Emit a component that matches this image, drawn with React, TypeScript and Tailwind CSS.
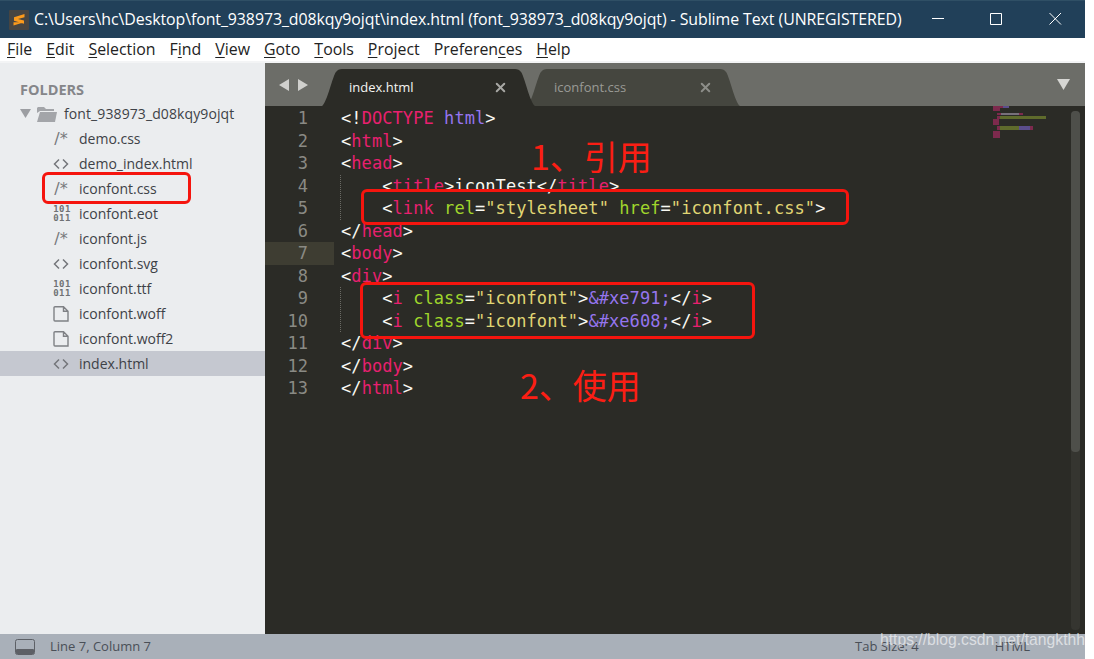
import { Fragment } from "react";
import { X } from "lucide-react";

type Tok = [string, string];

const P = "text-[#f8f8f2]";
const T = "text-[#e8206f]";
const A = "text-[#a0d62c]";
const S = "text-[#e0d674]";
const V = "text-[#9575ee]";

const code: Tok[][] = [
  [["<!", P], ["DOCTYPE", T], [" ", P], ["html", V], [">", P]],
  [["<", P], ["html", T], [">", P]],
  [["<", P], ["head", T], [">", P]],
  [["    <", P], ["title", T], [">iconTest</", P], ["title", T], [">", P]],
  [["    <", P], ["link", T], [" ", P], ["rel", A], ["=", P], ['"stylesheet"', S], [" ", P], ["href", A], ["=", P], ['"iconfont.css"', S], [">", P]],
  [["</", P], ["head", T], [">", P]],
  [["<", P], ["body", T], [">", P]],
  [["<", P], ["div", T], [">", P]],
  [["    <", P], ["i", T], [" ", P], ["class", A], ["=", P], ['"iconfont"', S], [">", P], ["&#xe791;", V], ["</", P], ["i", T], [">", P]],
  [["    <", P], ["i", T], [" ", P], ["class", A], ["=", P], ['"iconfont"', S], [">", P], ["&#xe608;", V], ["</", P], ["i", T], [">", P]],
  [["</", P], ["div", T], [">", P]],
  [["</", P], ["body", T], [">", P]],
  [["</", P], ["html", T], [">", P]],
];

const files = [
  { name: "demo.css", icon: "css" },
  { name: "demo_index.html", icon: "html" },
  { name: "iconfont.css", icon: "css" },
  { name: "iconfont.eot", icon: "bin" },
  { name: "iconfont.js", icon: "css" },
  { name: "iconfont.svg", icon: "html" },
  { name: "iconfont.ttf", icon: "bin" },
  { name: "iconfont.woff", icon: "file" },
  { name: "iconfont.woff2", icon: "file" },
  { name: "index.html", icon: "html" },
];

const menu = ["File", "Edit", "Selection", "Find", "View", "Goto", "Tools", "Project", "Preferences", "Help"];
const underlineAt: Record<string, number> = { Find: 1, Preferences: 8 };

function FileIcon({ icon }: { icon: string }) {
  if (icon === "css") {
    return <span className="w-4 text-center text-[16px] leading-none text-[#77797c] font-['DejaVu_Sans',sans-serif]">/*</span>;
  }
  if (icon === "bin") {
    return (
      <span className="w-[18px] text-center text-[9px] leading-[9px] font-semibold tracking-[0.4px] text-[#6f7174] font-['DejaVu_Sans_Mono',monospace]">
        101<br />011
      </span>
    );
  }
  if (icon === "html") {
    return (
      <svg width="16" height="12" viewBox="0 0 16 12" fill="none" stroke="#74767a" strokeWidth="1.5">
        <path d="M6 1.5 1.5 6 6 10.5M10 1.5 14.5 6 10 10.5" />
      </svg>
    );
  }
  return (
    <svg width="16" height="16" viewBox="0 0 16 16" fill="none" stroke="#7f8185" strokeWidth="1.4">
      <path d="M2 .8h8.5L15 5.3V15H2a1 1 0 0 1-1-1V1.8a1 1 0 0 1 1-1ZM10.5.8v4.5H15" />
    </svg>
  );
}

function Tab({ label, active }: { label: string; active?: boolean }) {
  return (
    <div className={`relative flex h-[37px] w-[213px] items-center text-[13px] ${active ? "z-10 text-[#f4f4f2]" : "-ml-[8px] text-[#9a9b96]"}`}>
      <svg className="absolute inset-0" width="213" height="37" viewBox="0 0 213 37">
        <path
          d="M0 37 C5 34 11 6 14 3 Q16 0 20 0 H193 Q197 0 199 3 C202 6 208 34 213 37 Z"
          fill={active ? "#2b2b26" : "#45463f"}
        />
      </svg>
      <span className="relative ml-[27px] flex-1">{label}</span>
      <X className={`relative mr-[27px] ${active ? "text-[#a8a8a4]" : "text-[#8d8e89]"}`} size={15} strokeWidth={3.2} />
    </div>
  );
}

function Minimap() {
  return (
    <svg className="absolute left-[728px] top-0" width="54" height="34" viewBox="0 0 54 34">
      <rect x="0" y="0" width="10" height="2" fill="#7d2a4d" />
      <rect x="10" y="0" width="6" height="2" fill="#5b4e8c" />
      <rect x="0" y="2" width="7" height="3" fill="#7d2a4d" />
      <rect x="4" y="7" width="4" height="2" fill="#7d2a4d" />
      <rect x="8" y="7" width="18" height="2" fill="#77707a" />
      <rect x="26" y="7" width="4" height="2" fill="#7d2a4d" />
      <rect x="4" y="10" width="3" height="3" fill="#7d2a4d" />
      <rect x="7" y="10" width="46" height="3" fill="#5f6b2c" />
      <rect x="0" y="13" width="6" height="6" fill="#7d2a4d" />
      <rect x="4" y="20" width="3" height="4" fill="#7d2a4d" />
      <rect x="7" y="20" width="19" height="4" fill="#5f6b2c" />
      <rect x="26" y="20" width="11" height="4" fill="#5b4e8c" />
      <rect x="37" y="20" width="3" height="4" fill="#7d2a4d" />
      <rect x="0" y="25" width="7" height="7" fill="#7d2a4d" />
    </svg>
  );
}

export default function App() {
  return (
    <div className="relative flex h-[659px] w-[1094px] overflow-hidden bg-white font-['Open_Sans',sans-serif]">
      <div className="flex w-[1085px] flex-col">
        {/* title bar */}
        <div className="flex h-[38px] shrink-0 items-center border-t border-t-[#2f4f65] bg-[#214059] pl-[9px] text-white">
          <svg width="20" height="20" viewBox="0 0 20 20">
            <rect width="20" height="20" rx="1" fill="#474542" />
            <path d="M15.5 4 5 7.2v3.6l10 3v-3.2L9 9l6.5-1.8ZM4.5 12.2v3.3l10.5-3.2Z" fill="#fb9a1c" />
          </svg>
          <span className="ml-[5px] text-[15.9px] tracking-[-0.07px]">
            C:\Users\hc\Desktop\font_938973_d08kqy9ojqt\index.html (font_938973_d08kqy9ojqt) - Sublime Text (UNREGISTERED)
          </span>
          <svg className="absolute left-[932px] top-[12px]" width="130" height="14" viewBox="0 0 130 14" fill="none" stroke="#fff">
            <path d="M0 6.5h12M58.5 1.5h11v11h-11ZM117.5 1 129 12.5M129 1 117.5 12.5" />
          </svg>
        </div>

        {/* menu */}
        <div className="flex h-[23px] shrink-0 items-center gap-[14px] bg-white pl-[7px] text-[15.9px] text-[#222]">
          {menu.map((m) => {
            const i = underlineAt[m] ?? 0;
            return (
              <span key={m}>
                {m.slice(0, i)}
                <span className="underline underline-offset-2">{m[i]}</span>
                {m.slice(i + 1)}
              </span>
            );
          })}
        </div>
        <div className="h-[2px] shrink-0 bg-[#f3f4f5]" />

        <div className="flex min-h-0 flex-1">
          {/* sidebar */}
          <div className="w-[265px] shrink-0 bg-[#ebedef] pt-[16px]">
            <div className="pl-[20px] text-[14.5px] font-bold leading-[22px] text-[#85868a]">FOLDERS</div>
            <div className="flex h-[25px] items-center pl-[20px] text-[14px] text-[#3e4247]">
              <svg width="11" height="9" viewBox="0 0 11 9">
                <path d="M0 0h11L5.5 9Z" fill="#9c9ea2" />
              </svg>
              <svg className="ml-[5px]" width="21" height="16" viewBox="0 0 21 16">
                <path d="M2 1h6l2 2h8v2H4L1 7V2Z" fill="#a3a5a9" />
                <path d="M4 6h17l-2 10H1Z" fill="#a3a5a9" />
              </svg>
              <span className="ml-[7px] tracking-[0.1px]">font_938973_d08kqy9ojqt</span>
            </div>
            {files.map((f) => (
              <div
                key={f.name}
                className={`flex h-[25px] items-center pl-[53px] text-[14px] text-[#3e4247] ${f.name === "index.html" ? "bg-[#c5c8d0]" : ""}`}
              >
                <span className="flex w-[26px] shrink-0 items-center">
                  <FileIcon icon={f.icon} />
                </span>
                {f.name}
              </div>
            ))}
          </div>

          {/* editor */}
          <div className="flex min-w-0 flex-1 flex-col">
            <div className="relative flex h-[43px] shrink-0 items-end bg-[#6c6d68] pl-[57px]">
              <svg className="absolute left-[14px] top-[16px]" width="29" height="12" viewBox="0 0 29 12">
                <path d="M0 6 10 0v12ZM29 6 19 0v12Z" fill="#d0d0cd" />
              </svg>
              <Tab label="index.html" active />
              <Tab label="iconfont.css" />
              <svg className="absolute left-[792px] top-[16px]" width="13" height="11" viewBox="0 0 13 11">
                <path d="M0 0h13L6.5 11Z" fill="#d6d6d3" />
              </svg>
            </div>
            <div className="relative flex min-h-0 flex-1 bg-[#2b2b26] pt-px text-[17px] leading-[22.5px] font-['DejaVu_Sans_Mono',monospace]">
              <div className="w-[69px] shrink-0 text-right text-[#8a8a84]">
                {code.map((_, i) => (
                  <div key={i} className={`h-[22.5px] pr-[26px] ${i === 6 ? "bg-[#3e3d32]" : ""}`}>
                    {i + 1}
                  </div>
                ))}
              </div>
              <div className="relative pl-[7px] tracking-[0.07px]">
                {code.map((line, i) => (
                  <div key={i} className="h-[22.5px] whitespace-pre">
                    {line.map(([t, c], j) => (
                      <Fragment key={j}>
                        <span className={c}>{t}</span>
                      </Fragment>
                    ))}
                  </div>
                ))}
                <div className="absolute left-[6px] top-[68px] h-[45px] border-l border-dotted border-[#6a6a64]" />
                <div className="absolute left-[6px] top-[180px] h-[45px] border-l border-dotted border-[#6a6a64]" />
              </div>
              <Minimap />
              <div className="absolute bottom-[4px] left-[806px] top-[5px] w-[9px] rounded-[4px] bg-[#353530]">
                <div className="h-[341px] rounded-[4px] bg-[#4e4f4a]" />
              </div>
            </div>
          </div>
        </div>

        {/* status bar */}
        <div className="flex h-[25px] shrink-0 items-center bg-[#a9b0b9] pl-[15px] pt-px text-[13px] text-[#4a4f57]">
          <svg width="20" height="16" viewBox="0 0 20 16">
            <rect x="0.5" y="0.5" width="19" height="15" rx="2" fill="#a9b0b9" stroke="#5d6066" />
            <rect x="1" y="10" width="18" height="5" rx="1" fill="#5d6066" />
          </svg>
          <span className="ml-[15px]">Line 7, Column 7</span>
          <span className="ml-auto mr-[76px]">Tab Size: 4</span>
          <span className="mr-[55px]">HTML</span>
        </div>
      </div>

      {/* annotations drawn over the screenshot */}
      <div className="absolute left-[42px] top-[172px] h-[32px] w-[149px] rounded-[6px] border-[3px] border-[#f5150e]" />
      <div className="absolute left-[361px] top-[189px] h-[36px] w-[488px] rounded-[6px] border-[3px] border-[#f5150e]" />
      <div className="absolute left-[360px] top-[282px] h-[57px] w-[395px] rounded-[6px] border-[3px] border-[#f5150e]" />
      <div className="absolute left-[531px] top-[133px] text-[34px] leading-[46px] text-[#fb1e14] font-['Noto_Sans_CJK_SC',sans-serif]">1、引用</div>
      <div className="absolute left-[520px] top-[362px] text-[34px] leading-[46px] text-[#fb1e14] font-['Noto_Sans_CJK_SC',sans-serif]">2、使用</div>
      <div className="absolute left-[880px] top-[630px] text-[15.7px] leading-[20px] text-white/60 font-['Liberation_Sans',sans-serif]">https://blog.csdn.net/tangkthh</div>
    </div>
  );
}
